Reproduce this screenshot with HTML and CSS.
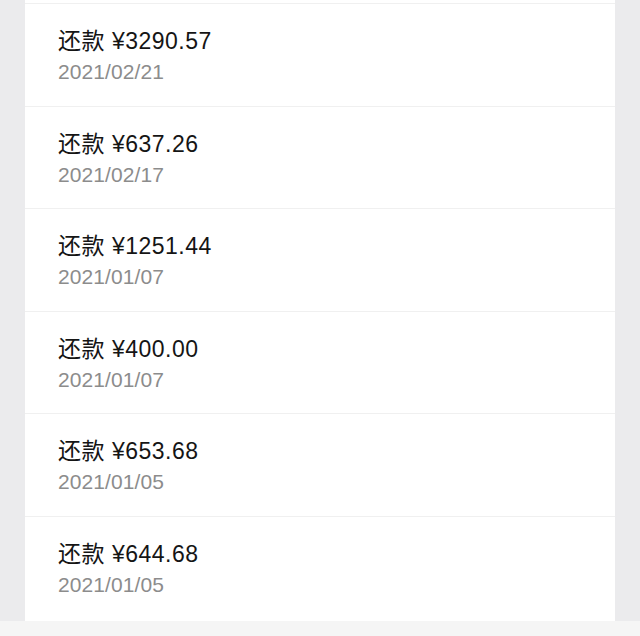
FILE: index.html
```html
<!DOCTYPE html>
<html lang="zh-CN">
<head>
    <meta charset="UTF-8">
    <meta name="viewport" content="width=device-width, initial-scale=1.0">
    <title>还款记录</title>
    <link rel="stylesheet" href="styles.css">
</head>
<body>
    <div class="list">
        <div class="row">
            <div class="title">还款 ¥3290.57</div>
            <div class="date">2021/02/21</div>
        </div>
        <div class="row">
            <div class="title">还款 ¥637.26</div>
            <div class="date">2021/02/17</div>
        </div>
        <div class="row">
            <div class="title">还款 ¥1251.44</div>
            <div class="date">2021/01/07</div>
        </div>
        <div class="row">
            <div class="title">还款 ¥400.00</div>
            <div class="date">2021/01/07</div>
        </div>
        <div class="row">
            <div class="title">还款 ¥653.68</div>
            <div class="date">2021/01/05</div>
        </div>
        <div class="row">
            <div class="title">还款 ¥644.68</div>
            <div class="date">2021/01/05</div>
        </div>
    </div>
    <div class="footer"></div>
</body>
</html>
```

FILE: styles.css
```css
body {
    margin: 0;
    background-color: #ebebed;
    font-family: 'Liberation Sans', 'Noto Sans CJK SC', sans-serif;
    color: #111;
}
.list {
    margin: 0 25px;
    padding-top: 3px;
    padding-bottom: 2px;
    background-color: #fff;
}
.row {
    height: 101.6px;
    border-top: 1px solid #f0f0f0;
    padding-left: 33px;
}
.title {
    padding-top: 23px;
    font-size: 23px;
    line-height: 28px;
    letter-spacing: 0.5px;
    color: #151515;
}
.date {
    margin-top: 4px;
    font-size: 21px;
    line-height: 26px;
    letter-spacing: 0.1px;
    color: #8c8c8c;
}
.footer {
    height: 16px;
    background-color: #f5f5f5;
}
```
